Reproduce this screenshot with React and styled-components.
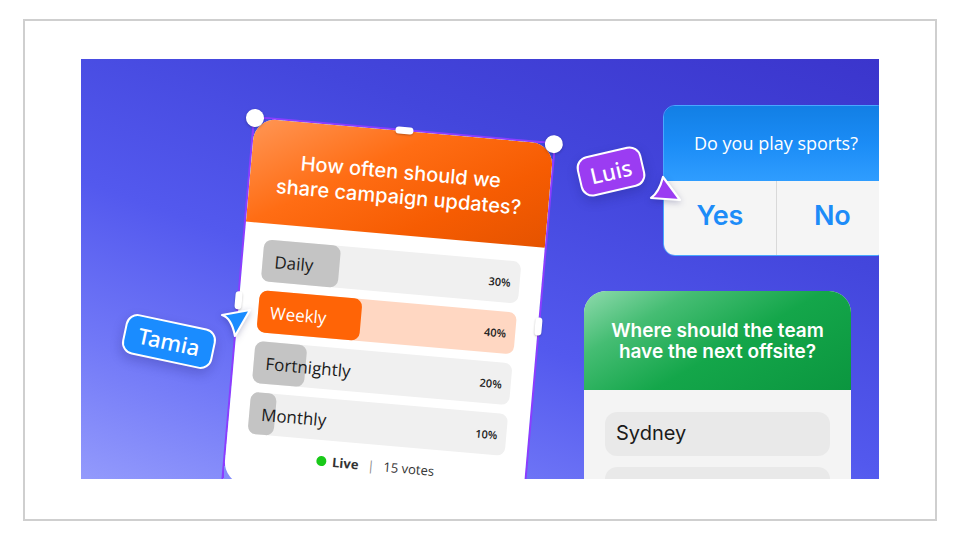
import React from "react";
import styled, { createGlobalStyle, css } from "styled-components";

const options = [
  { label: "Daily", pct: 30 },
  { label: "Weekly", pct: 40, active: true },
  { label: "Fortnightly", pct: 20 },
  { label: "Monthly", pct: 10 },
];

const GlobalStyle = createGlobalStyle`
  * { box-sizing: border-box; }
  body {
    margin: 0;
    background: #fff;
    font-family: "Inter", "Liberation Sans", sans-serif;
  }
`;

const Frame = styled.div`
  margin: 19px 0 0 23px;
  width: 914px;
  height: 502px;
  border: 2px solid #cfcfcf;
  padding: 38px 0 0 56px;
`;

// free canvas: items on it are placed where they sit in the design
const Canvas = styled.div`
  position: relative;
  width: 798px;
  height: 420px;
  overflow: hidden;
  background: linear-gradient(200deg, #3b35cc 0%, #4346dc 30%, #5359ee 58%, #7178f7 80%, #939afc 100%);
`;

const Selection = styled.div`
  position: absolute;
  left: 174px;
  top: 59px;
  width: 300px;
  height: 366px;
  transform: rotate(5deg);
  transform-origin: 0 0;
  box-shadow: 0 0 0 2px #8b3dff;
`;

const Corner = styled.span`
  position: absolute;
  top: -9px;
  width: 18px;
  height: 18px;
  border-radius: 50%;
  background: #fff;
  box-shadow: 0 1px 3px rgba(0, 0, 0, 0.25);
  z-index: 2;
  ${({ $side }) => ($side === "left" ? "left: -9px;" : "right: -9px;")}
`;

const Pill = styled.span`
  position: absolute;
  background: #fff;
  border-radius: 4px;
  box-shadow: 0 1px 2px rgba(0, 0, 0, 0.25);
  z-index: 2;
  ${({ $edge }) =>
    $edge === "top"
      ? css`
          width: 18px;
          height: 7px;
          top: -4px;
          left: 141px;
        `
      : css`
          width: 7px;
          height: 18px;
          top: 174px;
          ${$edge === "left" ? "left: -4px;" : "right: -4px;"}
        `}
`;

const PollCard = styled.div`
  width: 100%;
  height: 100%;
  background: #fff;
  border-radius: 22px;
  overflow: hidden;
  display: flex;
  flex-direction: column;
`;

const PollHeader = styled.div`
  height: 104px;
  flex-shrink: 0;
  display: flex;
  align-items: center;
  justify-content: center;
  padding: 4px 14px 0;
  background: linear-gradient(150deg, #ff9655 0%, #ff6d14 38%, #f65c02 70%, #e55300 100%);
  color: #fff;
  font: 500 20px/25px "Inter", sans-serif;
  text-align: center;
`;

const Options = styled.div`
  display: flex;
  flex-direction: column;
  gap: 9px;
  padding: 16px 22px 0 20px;
`;

const Track = styled.div`
  position: relative;
  height: 42px;
  border-radius: 8px;
  background: ${({ $active }) => ($active ? "#ffd7c2" : "#f0f0f0")};
  display: flex;
  align-items: center;
  justify-content: space-between;
  padding: 0 9px 0 12px;
`;

const Fill = styled.div`
  position: absolute;
  left: 0;
  top: 0;
  bottom: 0;
  border-radius: 8px;
  background: ${({ $active }) => ($active ? "#ff6406" : "#c4c4c4")};
`;

const OptionLabel = styled.span`
  position: relative;
  font: 400 17px "Open Sans", sans-serif;
  color: ${({ $active }) => ($active ? "#fff" : "#1b1b1b")};
`;

const Pct = styled.span`
  position: relative;
  font: 600 11px "Open Sans", sans-serif;
  color: #222;
`;

const PollFooter = styled.div`
  display: flex;
  align-items: center;
  justify-content: center;
  gap: 9px;
  margin-top: 14px;
  height: 14px;
  font: 500 13px/14px "Open Sans", sans-serif;
  color: #333;
`;

const LiveDot = styled.span`
  width: 10px;
  height: 10px;
  border-radius: 50%;
  background: #19c919;
  margin-right: -3px;
`;

const LiveText = styled.span`
  font-weight: 700;
`;

const Sep = styled.span`
  color: #888;
  font-weight: 400;
`;

const NameTag = styled.div`
  position: absolute;
  left: ${({ $x }) => $x}px;
  top: ${({ $y }) => $y}px;
  width: ${({ $w }) => $w}px;
  height: 41px;
  border: 2.5px solid #fff;
  border-radius: 12px;
  background: ${({ $color }) => $color};
  color: #fff;
  font: 500 22px "Noto Sans", "Open Sans", sans-serif;
  display: flex;
  align-items: center;
  justify-content: center;
  padding-bottom: 2px;
  transform: rotate(${({ $angle }) => $angle}deg);
  box-shadow: 0 5px 12px rgba(20, 20, 90, 0.22);
  z-index: 3;
`;

const CursorSvg = styled.svg`
  position: absolute;
  left: ${({ $x }) => $x}px;
  top: ${({ $y }) => $y}px;
  z-index: 3;
  overflow: visible;
  filter: drop-shadow(0 2px 3px rgba(20, 20, 90, 0.25));
`;

const SportsCard = styled.div`
  position: absolute;
  left: 582px;
  top: 46px;
  width: 226px;
  height: 151px;
  border: 1.5px solid #48a8ff;
  border-radius: 12px;
  overflow: hidden;
  display: flex;
  flex-direction: column;
`;

const SportsHeader = styled.div`
  height: 75px;
  flex-shrink: 0;
  display: flex;
  align-items: center;
  justify-content: center;
  background: linear-gradient(180deg, #127fe5 0%, #1b8cf6 50%, #2f9dff 100%);
  color: #fff;
  font: 500 18px "Open Sans", sans-serif;
  padding-bottom: 2px;
`;

const Answers = styled.div`
  flex: 1;
  display: flex;
  background: #f5f5f5;
`;

const Answer = styled.div`
  flex: 1;
  display: flex;
  align-items: center;
  justify-content: center;
  padding-bottom: 6px;
  color: #1d8cf8;
  font: 600 27px "Inter", sans-serif;
  letter-spacing: -0.3px;
  & + & {
    border-left: 1px solid #d9d9d9;
  }
`;

const OffsiteCard = styled.div`
  position: absolute;
  left: 503px;
  top: 232px;
  width: 267px;
  height: 260px;
  border-radius: 22px;
  overflow: hidden;
  background: #f4f4f4;
`;

const OffsiteHeader = styled.div`
  height: 99px;
  display: flex;
  align-items: center;
  justify-content: center;
  text-align: center;
  background: linear-gradient(150deg, #8fdaad 0%, #45bd73 25%, #14a64a 55%, #0b963f 100%);
  color: #fff;
  font: 600 19px/21px "Inter", sans-serif;
`;

const Places = styled.div`
  display: flex;
  flex-direction: column;
  gap: 11px;
  padding: 22px 21px;
`;

const Place = styled.div`
  height: 44px;
  border-radius: 12px;
  background: #e9e9e9;
  display: flex;
  align-items: center;
  padding: 0 11px 2px;
  font: 400 20px "Inter", sans-serif;
  color: #1b1b1b;
`;

const App = () => {
  return (
    <>
      <GlobalStyle />
      <Frame>
        <Canvas>
          <Selection>
            <Corner $side="left" />
            <Corner $side="right" />
            <Pill $edge="top" />
            <Pill $edge="left" />
            <Pill $edge="right" />
            <PollCard>
              <PollHeader>
                How often should we
                <br />
                share campaign updates?
              </PollHeader>
              <Options>
                {options.map((o) => (
                  <Track key={o.label} $active={o.active}>
                    <Fill $active={o.active} style={{ width: `${o.pct}%` }} />
                    <OptionLabel $active={o.active}>{o.label}</OptionLabel>
                    <Pct>{o.pct}%</Pct>
                  </Track>
                ))}
              </Options>
              <PollFooter>
                <LiveDot />
                <LiveText>Live</LiveText>
                <Sep>|</Sep>
                <span>15 votes</span>
              </PollFooter>
            </PollCard>
          </Selection>

          <NameTag $x={42} $y={262} $w={92} $angle={12} $color="#1a8cff">
            Tamia
          </NameTag>
          <CursorSvg $x={137} $y={246} width="36" height="36" viewBox="0 0 36 36">
            <path
              d="M32 5 L4 10 Q13.5 12.9 17 31 Z"
              fill="#1a8cff"
              stroke="#fff"
              strokeWidth="2.2"
              strokeLinejoin="round"
            />
          </CursorSvg>

          <SportsCard>
            <SportsHeader>Do you play sports?</SportsHeader>
            <Answers>
              <Answer>Yes</Answer>
              <Answer>No</Answer>
            </Answers>
          </SportsCard>

          <NameTag $x={497} $y={92} $w={66} $angle={-13} $color="#9b3cf2">
            Luis
          </NameTag>
          <CursorSvg $x={566} $y={114} width="38" height="32" viewBox="0 0 38 32">
            <path
              d="M16 4 Q12 19.5 4 25 L33 27 Z"
              fill="#9b3cf2"
              stroke="#fff"
              strokeWidth="2.2"
              strokeLinejoin="round"
            />
          </CursorSvg>

          <OffsiteCard>
            <OffsiteHeader>
              Where should the team
              <br />
              have the next offsite?
            </OffsiteHeader>
            <Places>
              <Place>Sydney</Place>
              <Place />
            </Places>
          </OffsiteCard>
        </Canvas>
      </Frame>
    </>
  );
};

export default App;
